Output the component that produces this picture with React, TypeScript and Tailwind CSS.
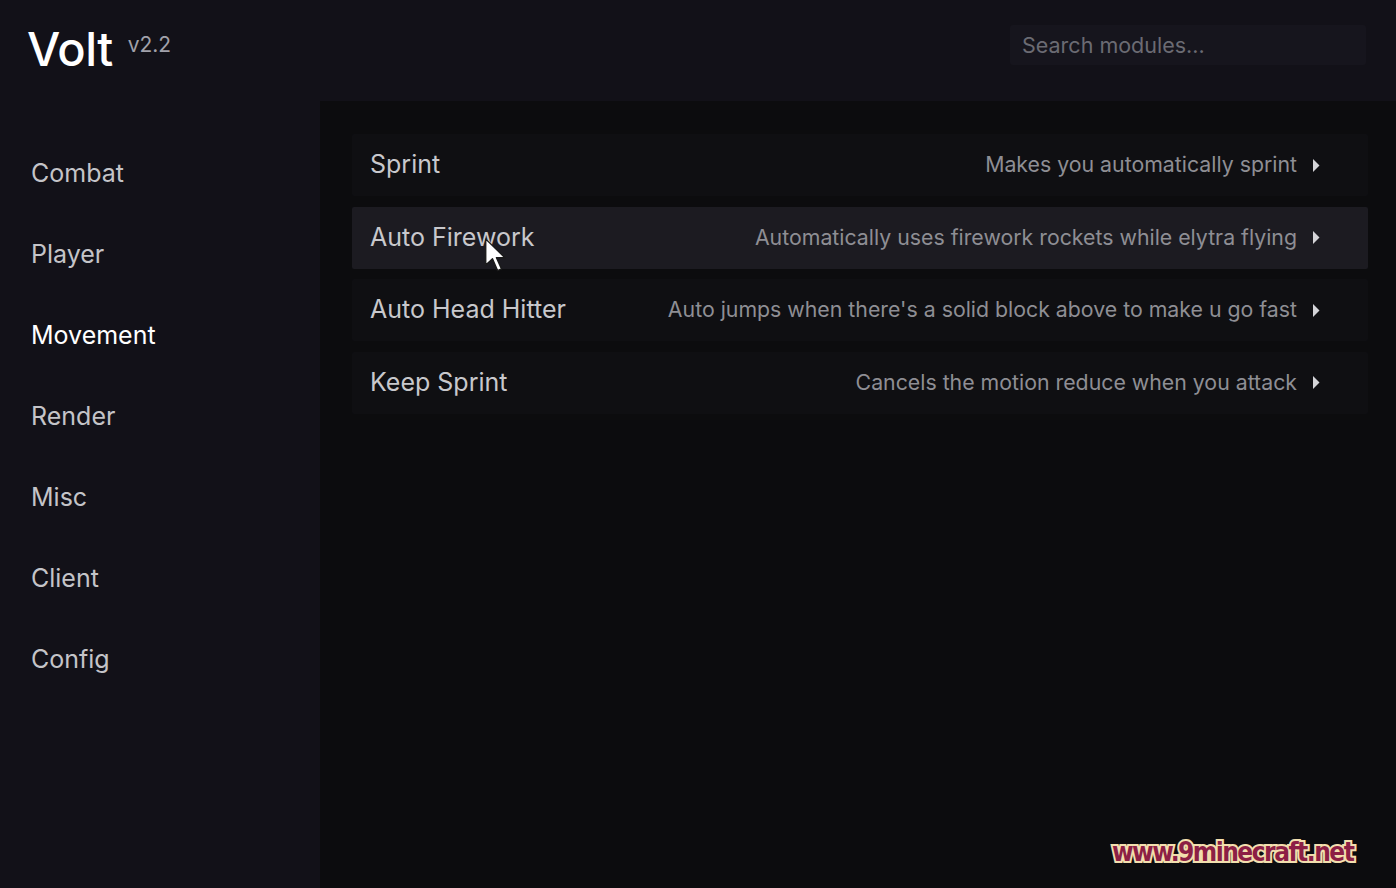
import { useState } from "react";

interface Module {
  name: string;
  description: string;
}

const categories = ["Combat", "Player", "Movement", "Render", "Misc", "Client", "Config"];

const modules: Module[] = [
  { name: "Sprint", description: "Makes you automatically sprint" },
  { name: "Auto Firework", description: "Automatically uses firework rockets while elytra flying" },
  { name: "Auto Head Hitter", description: "Auto jumps when there's a solid block above to make u go fast" },
  { name: "Keep Sprint", description: "Cancels the motion reduce when you attack" },
];

function Caret() {
  return (
    <svg width="8" height="15" viewBox="0 0 8 15" className="shrink-0">
      <path d="M1 1 L7.5 7.5 L1 14 Z" fill="#d4d4d8" />
    </svg>
  );
}

function Cursor() {
  return (
    <svg
      width="26"
      height="36"
      viewBox="0 0 22 32"
      className="absolute left-[484px] top-[238px] pointer-events-none"
    >
      <path
        d="M1 1 L1 24 L7 18.5 L11.5 29 L15 27.5 L10.5 17.5 L18 17.5 Z"
        fill="#ffffff"
        stroke="#1a1a1a"
        strokeWidth="1.2"
        strokeLinejoin="round"
      />
    </svg>
  );
}

export default function App() {
  const [active] = useState("Movement");
  const [hovered] = useState("Auto Firework");

  return (
    <main
      className="relative w-[1396px] h-[888px] overflow-hidden bg-[#121118] text-white flex flex-col"
      style={{ fontFamily: "Inter, 'Noto Sans', sans-serif" }}
    >
      {/* header */}
      <header className="h-[101px] shrink-0 flex items-start justify-between pl-[27px] pr-[30px]">
        <div className="flex items-start gap-[15px] pt-[24px]">
          <h1 className="text-[47px] leading-[50px] font-medium tracking-[-0.5px] text-white">Volt</h1>
          <span className="text-[21px] leading-[24px] text-[#a1a1aa] mt-[9px]">v2.2</span>
        </div>
        <div className="mt-[25px] w-[356px] h-[40px] bg-[#16151d] rounded-[3px] flex items-center px-[12px]">
          <span className="text-[21.5px] text-[#6b6b73]">Search modules...</span>
        </div>
      </header>

      <div className="flex flex-1 min-h-0">
        {/* sidebar */}
        <nav className="w-[320px] shrink-0 flex flex-col pl-[31px] pt-[56px] gap-[47.5px]">
          {categories.map((c) => (
            <div
              key={c}
              className={`text-[25px] leading-[33.5px] ${c === active ? "text-white" : "text-[#c4c4c8]"}`}
            >
              {c}
            </div>
          ))}
        </nav>

        {/* modules */}
        <section className="flex-1 bg-[#0c0c0e] pt-[33px] pl-[32px] pr-[28px] flex flex-col gap-[10.5px]">
          {modules.map((m) => (
            <div
              key={m.name}
              className={`h-[62px] rounded-[2px] flex items-center justify-between pl-[18px] pr-[48px] ${
                m.name === hovered ? "bg-[#1c1b21]" : "bg-[#0f0f12]"
              }`}
            >
              <span className="text-[25px] text-[#c8c8cc]">{m.name}</span>
              <div className="flex items-center gap-[15px]">
                <span className="text-[21.3px] text-[#8e8e94]">{m.description}</span>
                <Caret />
              </div>
            </div>
          ))}
        </section>
      </div>

      <Cursor />

      <div
        className="absolute left-[1112px] top-[835px] text-[26px] leading-[34px] font-bold tracking-[-1.5px] text-[#8c1f45] [-webkit-text-stroke:4px_#f3dfae] [paint-order:stroke_fill]"
        style={{ fontFamily: "'DejaVu Sans Condensed', 'Liberation Sans Narrow', sans-serif" }}
      >
        www.9minecraft.net
      </div>
    </main>
  );
}
